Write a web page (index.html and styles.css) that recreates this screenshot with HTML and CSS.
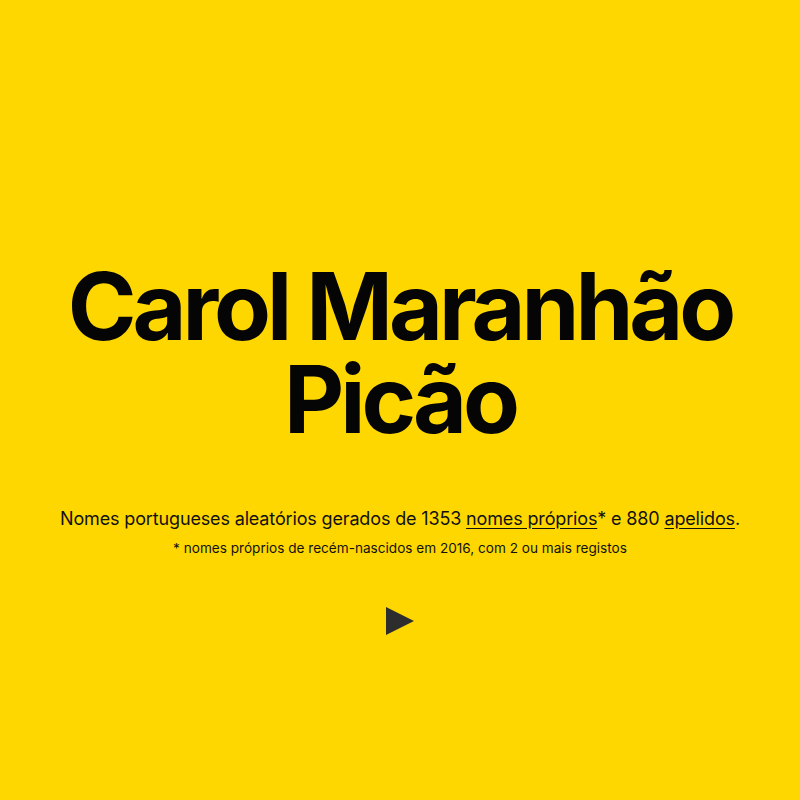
FILE: index.html
```html
<!DOCTYPE html>
<html lang="pt">
<head>
<meta charset="utf-8">
<title>Nomes portugueses</title>
<link rel="stylesheet" href="styles.css">
</head>
<body>
<main class="page">
  <h1 class="name"><span class="line">Carol Maranhão</span><span class="line">Picão</span></h1>
  <p class="lead">Nomes portugueses aleatórios gerados de 1353 <a href="#">nomes próprios</a>* e 880 <a href="#">apelidos</a>.</p>
  <p class="note">* nomes próprios de recém-nascidos em 2016, com 2 ou mais registos</p>
  <button class="play" aria-label="Gerar">
    <svg width="28" height="28" viewBox="0 0 28 28"><polygon points="0,0 28,14 0,28" fill="#2d2d2d"/></svg>
  </button>
</main>
</body>
</html>
```
FILE: styles.css
```css
html, body {
  margin: 0;
  padding: 0;
  background: #ffd700;
  font-family: Inter, "Noto Sans", sans-serif;
  color: #111;
}
.page {
  display: flex;
  flex-direction: column;
  align-items: center;
  text-align: center;
  padding-top: 260px;
}
.name {
  margin: 0;
  display: flex;
  flex-direction: column;
  align-items: center;
  font-size: 93px;
  line-height: 93px;
  font-weight: 700;
  letter-spacing: -4px;
  color: #050505;
}
.line {
  display: block;
}
.lead {
  margin: 61px 0 0;
  font-size: 18px;
  line-height: 24px;
  letter-spacing: -0.15px;
}
.lead a {
  color: inherit;
  text-decoration: underline;
  text-underline-offset: 3px;
}
.note {
  margin: 8px 0 0;
  font-size: 13.6px;
  line-height: 18px;
}
.play {
  margin-top: 50px;
  background: none;
  border: 0;
  padding: 0;
  cursor: pointer;
  line-height: 0;
}
```
